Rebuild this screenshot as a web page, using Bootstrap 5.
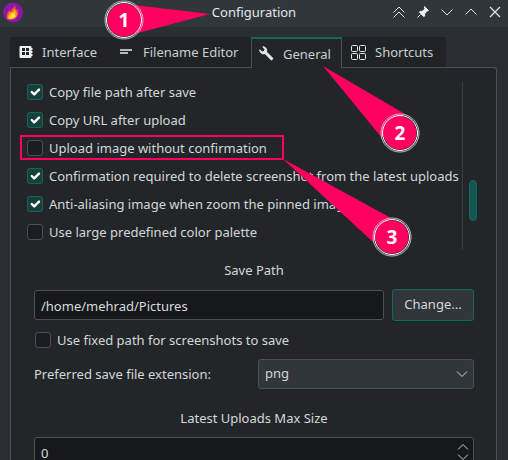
<!DOCTYPE html>
<html lang="en">
<head>
    <meta charset="UTF-8">
    <meta name="viewport" content="width=device-width, initial-scale=1.0">
    <title>Configuration</title>
    <link href="https://cdn.jsdelivr.net/npm/bootstrap@5.3.2/dist/css/bootstrap.min.css" rel="stylesheet">
    <script src="https://cdn.jsdelivr.net/npm/bootstrap@5.3.2/dist/js/bootstrap.bundle.min.js"></script>
    <style>
        html, body { height: 460px; overflow: hidden; }
        body { background: #2a2e32; color: #d3d7da; font: 13px/18px "Noto Sans", sans-serif; position: relative; }
        .title-bar { height: 27px; background: #31363b; padding: 0 1px 3px 3px; }
        .title-text { left: 0; right: 0; top: 3px; text-align: center; color: #e4e6e8; position: absolute; }
        .win-btn { width: 24px; height: 20px; display: flex; align-items: center; justify-content: center; }
        .tab-strip { margin: 10px 0 0 10px; height: 30px; position: relative; z-index: 1; white-space: nowrap; }
        .tab-item { height: 30px; background: #1f2326; color: #c9cdd0; padding: 0 0 0 9px; gap: 9px; }
        .tab-item svg { flex: none; }
        .tab-first { border-top-left-radius: 3px; width: 100px; }
        .tab-second { width: 141px; padding-left: 10px; gap: 11px; }
        .tab-active { background: #232629; width: 91px; padding-left: 7px; border-top: 2px solid #116a5f; border-left: 1px solid #4b5055; border-right: 1px solid #4b5055; margin-bottom: -1px; height: 31px; }
        .tab-last { width: 104px; border-top-right-radius: 3px; }
        .main-panel { margin: 0 11px 0 10px; height: 400px; background: #232629; border: 1px solid #4b5055; border-bottom: 0; border-top-right-radius: 3px; padding: 10px 0 0 16px; }
        .scroll-box { height: 173px; white-space: nowrap; }
        .check-list { width: 435px; flex: none; }
        .check-row { height: 28px; gap: 6px; }
        .form-check-input.box-input { width: 16px; height: 16px; margin: 0; flex: none; background-color: #1a1d21; border: 1px solid #4b5055; border-radius: 3px; box-shadow: none; }
        .form-check-input.box-input:checked { background-color: #17403d; border-color: #14665c; background-size: 16px; }
        .scroll-track { width: 28px; border-left: 1px solid #3a3f44; height: 168px; margin-top: 4px; padding: 98px 0 0 6px; }
        .scroll-thumb { width: 8px; height: 41px; background: #14584f; border: 1px solid #11695e; border-radius: 4px; }
        .section-head { text-align: center; margin-top: 10px; height: 18px; width: 454px; color: #d3d7da; }
        .path-row { margin: 11px 0 0 7px; gap: 8px; }
        .form-control.dark-input { height: 30px; background: #16181b; color: #d8dbde; border: 1px solid #4b5055; border-radius: 3px; padding: 1px 6px 0; font-size: 13px; box-shadow: none; }
        .path-input { width: 350px; flex: none; }
        .btn.change-btn { width: 82px; height: 32px; margin-top: -1px; background: #31363b; color: #d3d7da; border: 1px solid #11695e; border-radius: 3px; padding: 0; font-size: 13px; }
        .fixed-row { margin: 10px 0 0 8px; gap: 6px; }
        .ext-row { margin: 10px 0 0 7px; height: 30px; }
        .ext-label { width: 224px; margin-top: -1px; }
        .form-select.ext-select { width: 216px; height: 30px; padding: 0 6px; background-color: #31363b; color: #d3d7da; border: 1px solid #4b5055; border-radius: 3px; font-size: 13px; box-shadow: none; background-image: url("data:image/svg+xml,%3Csvg xmlns='http://www.w3.org/2000/svg' viewBox='0 0 12 8'%3E%3Cpath d='M1 1.5l5 5 5-5' fill='none' stroke='%23c9cdd0' stroke-width='1'/%3E%3C/svg%3E"); background-size: 12px 8px; background-position: right 5px center; }
        .size-head { margin-top: 20px; }
        .spin-wrap { margin: 10px 0 0 7px; width: 440px; }
        .spin-arrows { right: 5px; top: 6px; }
        .note-layer { left: 0; top: 0; pointer-events: none; z-index: 5; }
        .note-num { font: 700 19px "Noto Sans", sans-serif; fill: #fff; text-anchor: middle; }
    </style>
</head>
<body>
    <!-- Title bar -->
    <div class="title-bar d-flex align-items-center justify-content-between">
        <svg width="21" height="21" viewBox="0 0 21 21">
            <circle cx="10" cy="10.5" r="10" fill="#8a17a8"/>
            <path d="M4 17c-1-4 .5-7 2.500-9 .5 1.500 1 1.500 1.500 1 0-2.500 2.500-3 4.500-5.500-.5 2.500 0 3.500 1 4.500 .5-.5 .5-1 .5-1.500 1.500 2.500 1.500 6 0 8-1 2-3 3-5.500 3.500-2 0-3.500-.5-4.500-1z" fill="#ff4a3a"/>
            <path d="M5 17c-1-3.500 1.500-5.500 2.500-7.500 .5 1 1.500 1.500 2.500 0 .5-1 1.500-2 1.500-3 1 2.500 3 4.500 2 7.500-1 2-4 3.500-8.500 3z" fill="#ffa51a"/>
            <path d="M6.500 16.500c-.5-2 2-3.500 3.500-6.500 .5 2 3 3 2 5-.5 1-3.500 2-5.500 1.500z" fill="#ffe94a"/>
        </svg>
        <div class="title-text">Configuration</div>
        <div class="d-flex">
            <div class="win-btn">
                <svg width="14" height="14" viewBox="0 0 14 14" fill="none" stroke="#dfe2e4"><path d="M1.500 7.500l5.500-5.500 5.500 5.500M1.500 12.500l5.500-5.500 5.500 5.500"/></svg>
            </div>
            <div class="win-btn">
                <svg width="14" height="14" viewBox="0 0 14 14" fill="#f0f1f2" stroke="#f0f1f2"><path d="M8.500 1.500l4 4-1.500 .5-2.500 3 .2 2-1 .5-4.200-4.200 .5-1 2 .2 3-2.500z"/><path d="M4.500 9.500L1.500 12.500"/></svg>
            </div>
            <div class="win-btn">
                <svg width="14" height="14" viewBox="0 0 14 14" fill="none" stroke="#dfe2e4"><path d="M1.500 4.500l5.500 5.500 5.500-5.500"/></svg>
            </div>
            <div class="win-btn">
                <svg width="14" height="14" viewBox="0 0 14 14" fill="none" stroke="#dfe2e4"><path d="M1.500 9.500l5.500-5.500 5.500 5.500"/></svg>
            </div>
            <div class="win-btn">
                <svg width="14" height="14" viewBox="0 0 14 14" fill="none" stroke="#dfe2e4" stroke-width="1.300"><path d="M2 2l10 10M12 2l-10 10"/></svg>
            </div>
        </div>
    </div>

    <!-- Tabs -->
    <div class="tab-strip d-flex">
        <div class="tab-item tab-first d-flex align-items-center">
            <svg width="14" height="14" viewBox="0 0 14 14"><path d="M1.500 1h10a1 1 0 0 1 1 1v1h1v2h-1v1h1v2h-1v1h1v2h-1v1a1 1 0 0 1-1 1h-10a1 1 0 0 1-1-1v-10a1 1 0 0 1 1-1z" fill="#eceef0"/><path d="M3 3h3v3H3zM7 3h3v3H7zM3 7h3v3H3zM7 7h3v3H7z" fill="#1f2326"/></svg>
            <span>Interface</span>
        </div>
        <div class="tab-item tab-second d-flex align-items-center">
            <svg width="12" height="14" viewBox="0 0 12 14"><path d="M0 5h12M0 8h8" stroke="#eceef0" stroke-width="1.300"/></svg>
            <span>Filename Editor</span>
        </div>
        <div class="tab-item tab-active d-flex align-items-center">
            <svg width="15" height="15" viewBox="0 0 15 15"><path d="M14 12.500L7.500 6C8.300 3.800 7 .8 3.800 .8L6 3.400 5.200 5.400 3.200 6 .8 3.800C.8 7 3.700 8.500 6 7.600l6.400 6.500z" fill="#eceef0" stroke="#eceef0" stroke-width="1"/></svg>
            <span>General</span>
        </div>
        <div class="tab-item tab-last d-flex align-items-center">
            <svg width="15" height="15" viewBox="0 0 15 15" fill="none" stroke="#e4e6e8"><rect x="0.5" y="0.5" width="6" height="6" rx="1"/><rect x="8.500" y="0.5" width="6" height="6" rx="1"/><rect x="0.5" y="8.500" width="6" height="6" rx="1"/><rect x="8.500" y="8.500" width="6" height="6" rx="1"/></svg>
            <span>Shortcuts</span>
        </div>
    </div>

    <!-- General page -->
    <div class="main-panel">
        <div class="scroll-box d-flex">
            <div class="check-list">
                <label class="check-row d-flex align-items-center"><input class="form-check-input box-input" type="checkbox" checked><span>Copy file path after save</span></label>
                <label class="check-row d-flex align-items-center"><input class="form-check-input box-input" type="checkbox" checked><span>Copy URL after upload</span></label>
                <label class="check-row d-flex align-items-center"><input class="form-check-input box-input" type="checkbox"><span>Upload image without confirmation</span></label>
                <label class="check-row d-flex align-items-center"><input class="form-check-input box-input" type="checkbox" checked><span>Confirmation required to delete screenshot from the latest uploads</span></label>
                <label class="check-row d-flex align-items-center"><input class="form-check-input box-input" type="checkbox" checked><span>Anti-aliasing image when zoom the pinned image</span></label>
                <label class="check-row d-flex align-items-center"><input class="form-check-input box-input" type="checkbox"><span>Use large predefined color palette</span></label>
            </div>
            <div class="scroll-track"><div class="scroll-thumb"></div></div>
        </div>

        <div class="section-head">Save Path</div>
        <div class="path-row d-flex">
            <input class="form-control dark-input path-input" type="text" value="/home/mehrad/Pictures">
            <button class="btn change-btn" type="button">Change...</button>
        </div>
        <label class="fixed-row d-flex align-items-center"><input class="form-check-input box-input" type="checkbox"><span>Use fixed path for screenshots to save</span></label>
        <div class="ext-row d-flex align-items-center">
            <span class="ext-label">Preferred save file extension:</span>
            <select class="form-select ext-select"><option>png</option></select>
        </div>

        <div class="section-head size-head">Latest Uploads Max Size</div>
        <div class="spin-wrap position-relative">
            <input class="form-control dark-input" type="text" value="0">
            <svg class="spin-arrows position-absolute" width="12" height="18" viewBox="0 0 12 18" fill="none" stroke="#c9cdd0"><path d="M1 6.500l5-5 5 5M1 11.500l5 5 5-5"/></svg>
        </div>
    </div>

    <!-- Annotations on top of the screenshot -->
    <svg class="note-layer position-absolute" width="508" height="460" viewBox="0 0 508 460">
        <rect x="21" y="136" width="262" height="23" fill="none" stroke="#ff0060" stroke-width="2"/>
        <path d="M134 5L210 14 134 34z" fill="#ff0060"/>
        <path d="M323 66L405 114 382 138z" fill="#ff0060"/>
        <path d="M283 159L391 218 373 242z" fill="#ff0060"/>
        <g fill="#ff0060">
            <circle cx="124" cy="20" r="16.500"/>
            <circle cx="400" cy="133" r="16.500"/>
            <circle cx="392" cy="237" r="16.500"/>
        </g>
        <g fill="none" stroke="#fff">
            <circle cx="124" cy="20" r="17.500"/>
            <circle cx="400" cy="133" r="17.500"/>
            <circle cx="392" cy="237" r="17.500"/>
        </g>
        <g fill="none" stroke="#bdbdbd">
            <circle cx="124" cy="20" r="19"/>
            <circle cx="400" cy="133" r="19"/>
            <circle cx="392" cy="237" r="19"/>
        </g>
        <text class="note-num" x="124" y="27">1</text>
        <text class="note-num" x="400" y="140">2</text>
        <text class="note-num" x="392" y="244">3</text>
    </svg>
</body>
</html>
